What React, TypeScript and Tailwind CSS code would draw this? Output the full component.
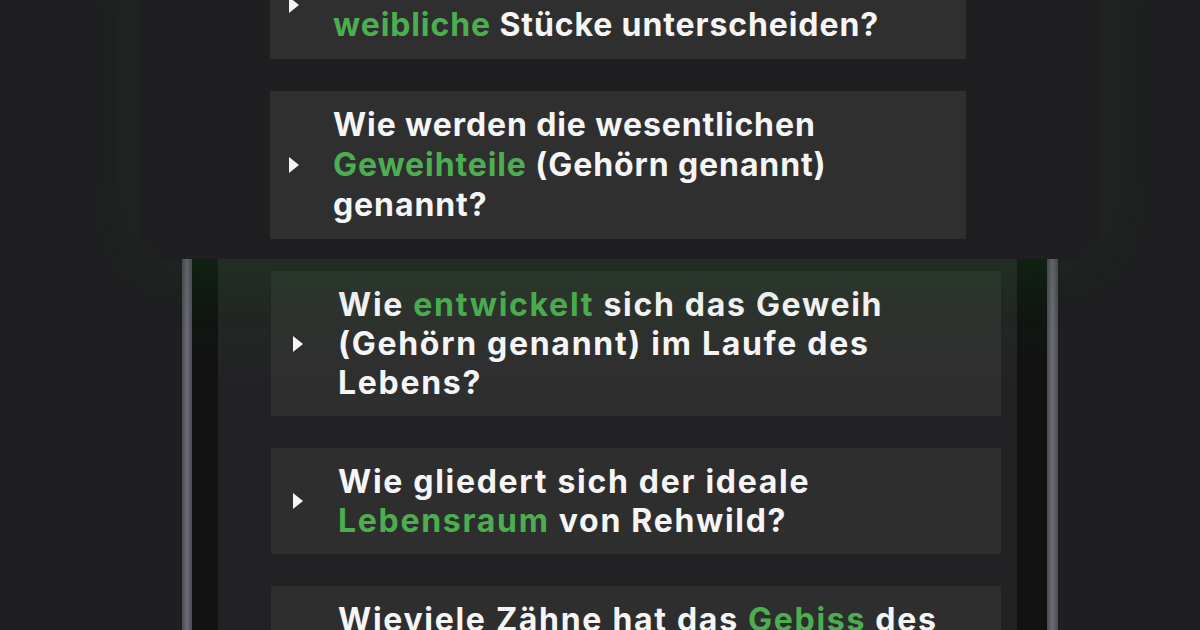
import React from 'react';

const G = ({ children }: { children: React.ReactNode }) => (
  <span className="text-[#4cae50]">{children}</span>
);

function Arrow() {
  return (
    <svg width="10" height="16" viewBox="0 0 10 16" className="shrink-0">
      <polygon points="0,0 10,8 0,16" fill="#f5f5f5" />
    </svg>
  );
}

function CardItem({ lines }: { lines: React.ReactNode[] }) {
  return (
    <div className="flex items-center bg-[#2f2f30] py-[14px]">
      <div className="w-[63px] pl-[19px]">
        <Arrow />
      </div>
      <p className="text-[32px] leading-[40px] font-bold text-[#f5f5f5] tracking-[0.9px]">
        {lines.map((l, i) => (
          <span key={i} className="block whitespace-nowrap">
            {l}
          </span>
        ))}
      </p>
    </div>
  );
}

function PhoneItem({ lines, tint }: { lines: React.ReactNode[]; tint?: boolean }) {
  return (
    <div
      className={
        'flex items-center py-[14px] ' +
        (tint
          ? 'bg-[linear-gradient(to_bottom,#2c362d_0px,#2e2f2e_90px,#2e2e2e_146px)]'
          : 'bg-[#2e2e2e]')
      }
    >
      <div className="w-[67px] pl-[22px]">
        <Arrow />
      </div>
      <p className="text-[32px] leading-[39px] font-bold text-[#f5f5f5] tracking-[1.7px]">
        {lines.map((l, i) => (
          <span key={i} className="block whitespace-nowrap">
            {l}
          </span>
        ))}
      </p>
    </div>
  );
}

export default function App() {
  return (
    <div className="w-[1200px] h-[630px] overflow-hidden bg-[#1f1f21] font-['Inter','Noto_Sans',sans-serif]">
      {/* overlay card with the first questions */}
      <div className="relative z-10 ml-[139px] w-[961px] -mt-[49px] rounded-b-[30px] bg-[#1f1f21] pb-[20px] pl-[131px] pr-[134px] shadow-[0_0_60px_6px_rgba(30,70,32,0.28)] flex flex-col gap-[32px]">
        <CardItem
          lines={[
            <>Wie kann man männliche und</>,
            <>
              <G>weibliche</G> Stücke unterscheiden?
            </>,
          ]}
        />
        <CardItem
          lines={[
            <>Wie werden die wesentlichen</>,
            <>
              <G>Geweihteile</G> (Gehörn genannt)
            </>,
            <>genannt?</>,
          ]}
        />
      </div>

      {/* phone */}
      <div className="ml-[182px] w-[876px] h-[400px] flex">
        <div className="w-[10px] bg-[linear-gradient(to_right,#4a4b52,#6a6b74,#4a4b52)]" />
        <div className="w-[26px] bg-[linear-gradient(to_bottom,#0f1c11_0px,#121212_100px)]" />
        <div className="flex-1 bg-[linear-gradient(to_bottom,#232b24_0px,#222224_130px)] pt-[12px] pl-[53px] pr-[16px] flex flex-col gap-[32px]">
          <PhoneItem
            tint
            lines={[
              <>
                Wie <G>entwickelt</G> sich das Geweih
              </>,
              <>(Gehörn genannt) im Laufe des</>,
              <>Lebens?</>,
            ]}
          />
          <PhoneItem
            lines={[
              <>Wie gliedert sich der ideale</>,
              <>
                <G>Lebensraum</G> von Rehwild?
              </>,
            ]}
          />
          <PhoneItem
            lines={[
              <>
                Wieviele Zähne hat das <G>Gebiss</G> des
              </>,
              <>Rehwildes?</>,
            ]}
          />
        </div>
        <div className="w-[30px] bg-[linear-gradient(to_bottom,#0f1c11_0px,#121212_100px)]" />
        <div className="w-[11px] bg-[linear-gradient(to_right,#4a4b52,#6a6b74,#4a4b52)]" />
      </div>
    </div>
  );
}
